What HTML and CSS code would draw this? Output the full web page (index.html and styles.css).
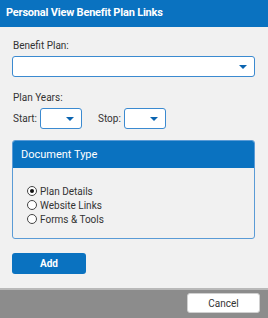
FILE: index.html
```html
<!DOCTYPE html>
<html lang="en">
<head>
    <meta charset="UTF-8">
    <title>Personal View Benefit Plan Links</title>
    <link rel="stylesheet" href="styles.css">
</head>
<body>
    <div class="dialog">
        <div class="header">Personal View Benefit Plan Links</div>
        <div class="content">
            <!-- Benefit plan -->
            <label class="field-label">Benefit Plan:</label>
            <div class="select wide"><span class="caret"></span></div>

            <!-- Plan years -->
            <label class="field-label years-label">Plan Years:</label>
            <div class="years">
                <span class="inline-label">Start:</span>
                <div class="select small"><span class="caret"></span></div>
                <span class="inline-label stop">Stop:</span>
                <div class="select small"><span class="caret"></span></div>
            </div>

            <!-- Document type -->
            <div class="panel">
                <div class="panel-head">Document Type</div>
                <div class="panel-body">
                    <label class="radio"><span class="dot checked"></span>Plan Details</label>
                    <label class="radio"><span class="dot"></span>Website Links</label>
                    <label class="radio"><span class="dot"></span>Forms &amp; Tools</label>
                </div>
            </div>

            <button class="add-button">Add</button>
        </div>
        <div class="footer">
            <button class="cancel-button">Cancel</button>
        </div>
    </div>
</body>
</html>
```

FILE: styles.css
```css
body {
    margin: 0;
    padding: 0;
    font-family: Roboto, "Liberation Sans", sans-serif;
    color: #333;
}
.dialog {
    width: 268px;
    height: 318px;
    display: flex;
    flex-direction: column;
    background-color: #f1f1f1;
}
.header {
    background-color: #0a72c0;
    color: white;
    height: 27px;
    line-height: 26px;
    padding-left: 6px;
    font-size: 11px;
    font-weight: bold;
    letter-spacing: -0.2px;
}
.content {
    flex: 1;
    padding: 12px 13px 0 12px;
    display: flex;
    flex-direction: column;
}
.field-label {
    font-size: 10px;
    line-height: 12px;
    margin-top: 1px;
    margin-left: 1px;
}
.years-label {
    margin-top: 15px;
}
.select {
    box-sizing: border-box;
    background-color: white;
    border: 1px solid #3b8ad0;
    border-radius: 3px;
    height: 21px;
    position: relative;
}
.select.wide {
    margin-top: 4px;
}
.select.small {
    width: 42px;
    height: 21px;
}
.caret {
    position: absolute;
    right: 7px;
    top: 8px;
    width: 0;
    height: 0;
    border-left: 4px solid transparent;
    border-right: 4px solid transparent;
    border-top: 4px solid #0a64b0;
}
.years {
    display: flex;
    align-items: center;
    margin-top: 4px;
}
.inline-label {
    font-size: 10px;
    margin-left: 1px;
    margin-right: 3px;
}
.inline-label.stop {
    margin-left: 16px;
    margin-right: 3px;
}
.panel {
    margin-top: 11px;
    border: 1px solid #5a9bd6;
    border-radius: 3px;
    height: 99px;
    box-sizing: border-box;
    overflow: hidden;
}
.panel-head {
    background-color: #0a72c0;
    color: white;
    font-size: 11px;
    height: 27px;
    line-height: 28px;
    padding-left: 8px;
}
.panel-body {
    padding: 16px 0 0 14px;
    display: flex;
    flex-direction: column;
}
.radio {
    display: flex;
    align-items: center;
    font-size: 10px;
    height: 14px;
}
.dot {
    box-sizing: border-box;
    width: 10px;
    height: 10px;
    border: 1px solid #444;
    border-radius: 50%;
    background-color: white;
    margin-right: 3px;
    position: relative;
}
.dot.checked::after {
    content: "";
    position: absolute;
    left: 2px;
    top: 2px;
    width: 4px;
    height: 4px;
    border-radius: 50%;
    background-color: #111;
}
.add-button {
    margin-top: 14px;
    width: 74px;
    height: 21px;
    background-color: #0a72c0;
    color: white;
    border: none;
    border-radius: 3px;
    font-family: inherit;
    font-size: 10px;
    font-weight: bold;
}
.footer {
    height: 30px;
    background-color: #8c8c8c;
    border-top: 2px solid #b9b9b9;
    box-sizing: border-box;
    display: flex;
    justify-content: flex-end;
    align-items: flex-start;
    padding: 3px 8px 0 0;
}
.cancel-button {
    width: 73px;
    height: 20px;
    background-color: white;
    border: 1px solid #d0d0d0;
    border-radius: 3px;
    font-family: inherit;
    font-size: 10px;
    color: #333;
}
```
